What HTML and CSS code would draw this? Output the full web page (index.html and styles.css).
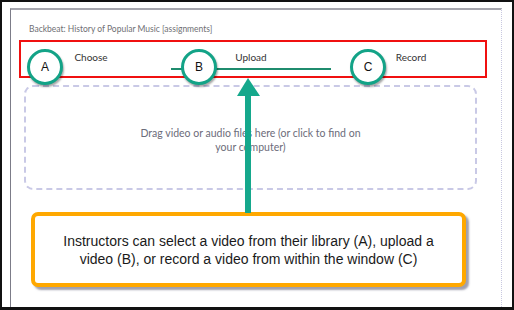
FILE: index.html
```html
<!DOCTYPE html>
<html>
<head>
<meta charset="utf-8">
<link rel="stylesheet" href="styles.css">
</head>
<body>
<div class="frame">
  <div class="panel">
    <div class="title">Backbeat: History of Popular Music [assignments]</div>
    <div class="tabs">
      <div class="tab">Choose</div>
      <div class="tab active">Upload</div>
      <div class="tab">Record</div>
    </div>
    <div class="dropzone">
      <p class="drop-text">Drag video or audio files here (or click to find on<br>your computer)</p>
    </div>
    <div class="callout">
      <p>Instructors can select a video from their library (A), upload a<br>video (B), or record a video from within the window (C)</p>
    </div>

    <div class="redbox"></div>
    <div class="badge badge-a">A</div>
    <div class="badge badge-b">B</div>
    <div class="badge badge-c">C</div>
    <svg class="arrow" width="25" height="135" viewBox="0 0 25 135">
      <polygon points="12,0 24,18 1,18" fill="#15a88c"/>
      <rect x="9" y="17" width="6" height="118" fill="#15a88c"/>
    </svg>
  </div>
</div>
</body>
</html>
```

FILE: styles.css
```css
* { box-sizing: border-box; }
html, body { margin: 0; padding: 0; background: #fff; }
.frame {
  width: 514px;
  height: 310px;
  border: 2px solid #111;
  border-bottom-width: 3px;
  padding: 6px 10px 0 8px;
  display: flex;
  background: #fff;
}
.panel {
  position: relative;
  flex: 1;
  border-left: 1px solid #7c7c88;
  border-top: 2px solid #a6a6ae;
  border-right: 1px dotted #c8c8e0;
  font-family: Lato, "Open Sans", sans-serif;
}
.title {
  margin: 13px 0 0 18px;
  font-size: 8.5px;
  line-height: 12px;
  color: #6f6f74;
}
.tabs {
  margin-top: 11px;
  display: grid;
  grid-template-columns: 160px 160px 160px;
}
.tab {
  text-align: center;
  font-size: 10px;
  line-height: 14px;
  color: #333;
  padding: 4px 0;
  border-bottom: 2px solid transparent;
}
.tab.active { border-bottom-color: #1f8c6e; }
.dropzone {
  margin: 15px 24px 0 13px;
  height: 105px;
  border: 2px dashed #c9c9e6;
  border-radius: 9px;
  display: flex;
  align-items: center;
  justify-content: center;
}
.drop-text {
  margin: 4px 0 0;
  text-align: center;
  font-size: 10.5px;
  line-height: 14px;
  color: #6c6c7a;
}
.callout {
  margin: 22px 0 0 20px;
  width: 435px;
  height: 75px;
  border: 4px solid #ffa800;
  border-radius: 7px;
  background: #fff;
  box-shadow: 3px 3px 2px rgba(120,120,140,.7);
  display: flex;
  align-items: center;
  justify-content: center;
}
.callout p {
  margin: 0;
  text-align: center;
  font-family: "Liberation Sans", Arial, sans-serif;
  font-size: 14px;
  line-height: 18px;
  color: #1a1a1a;
}
.redbox {
  position: absolute;
  left: 8px;
  top: 30px;
  width: 468px;
  height: 38px;
  border: 2px solid #f01010;
}
.badge {
  position: absolute;
  top: 39px;
  width: 36px;
  height: 36px;
  border-radius: 50%;
  border: 3px solid #13a387;
  background: #fff;
  box-shadow: 1px 2px 2px rgba(0,0,0,.35);
  display: flex;
  align-items: center;
  justify-content: center;
  font-family: "Liberation Sans", Arial, sans-serif;
  font-size: 12px;
  color: #111;
}
.badge-a { left: 16px; }
.badge-b { left: 170px; }
.badge-c { left: 339px; }
.arrow {
  position: absolute;
  left: 225px;
  top: 68px;
}
```
